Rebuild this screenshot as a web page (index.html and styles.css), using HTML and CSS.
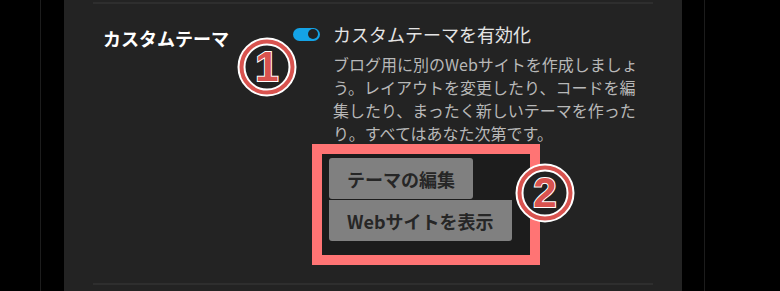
FILE: index.html
```html
<!DOCTYPE html>
<html lang="ja">
<head>
    <meta charset="UTF-8">
    <meta name="viewport" content="width=device-width, initial-scale=1.0">
    <title>カスタムテーマ</title>
    <link rel="stylesheet" href="styles.css">
</head>
<body>

    <div class="frame">
        <div class="gutter"></div>

        <!-- Settings panel -->
        <div class="panel">
            <div class="setting-row">
                <div class="setting-label">カスタムテーマ</div>

                <svg class="marker marker-one" width="60" height="60" viewBox="0 0 60 60">
                    <circle cx="30" cy="30" r="25.5" fill="#222" stroke="#fff" stroke-width="8"/>
                    <circle cx="30" cy="30" r="25.5" fill="none" stroke="#d9534f" stroke-width="4"/>
                    <text x="30" y="44" text-anchor="middle" class="marker-num">1</text>
                </svg>

                <div class="setting-body">
                    <label class="toggle-line">
                        <span class="toggle"><span class="knob"></span></span>
                        <span class="toggle-text">カスタムテーマを有効化</span>
                    </label>
                    <p class="help">ブログ用に別のWebサイトを作成しましょう。レイアウトを変更したり、コードを編集したり、まったく新しいテーマを作ったり。すべてはあなた次第です。</p>

                    <!-- Highlighted button group -->
                    <div class="highlight">
                        <button class="btn">テーマの編集</button>
                        <button class="btn">Webサイトを表示</button>

                        <svg class="marker marker-two" width="60" height="60" viewBox="0 0 60 60">
                            <circle cx="30" cy="30" r="25.5" fill="#222" stroke="#fff" stroke-width="8"/>
                            <circle cx="30" cy="30" r="25.5" fill="none" stroke="#d9534f" stroke-width="4"/>
                            <text x="30" y="44" text-anchor="middle" class="marker-num">2</text>
                        </svg>
                    </div>
                </div>
            </div>
        </div>

        <div class="gutter gutter-right"></div>
    </div>

</body>
</html>
```

FILE: styles.css
```css
body {
    font-family: "Noto Sans CJK JP", "Noto Sans", sans-serif;
    margin: 0;
    padding: 0;
    background-color: #000;
    width: 780px;
    height: 291px;
    overflow: hidden;
}

.frame {
    display: flex;
    height: 291px;
}

.gutter {
    width: 40px;
    margin-right: 23px;
    border-right: 1px solid #1c1c1c;
    flex-shrink: 0;
}

.gutter-right {
    width: 22px;
    margin-right: 0;
    border-right: 1px solid #1c1c1c;
}

.panel {
    width: 618px;
    background-color: #232323;
    padding: 0 29px;
    box-sizing: border-box;
    flex-shrink: 0;
}

.setting-row {
    position: relative;
    display: flex;
    border-top: 2px solid #2e2e2e;
    border-bottom: 2px solid #2e2e2e;
    margin-top: 2px;
    height: 283px;
    box-sizing: border-box;
    padding: 18px 0 0 10px;
}

.setting-label {
    width: 190px;
    color: #fff;
    font-size: 18px;
    font-weight: bold;
    line-height: 26px;
    padding-top: 3px;
}

.setting-body {
    flex: 1;
}

.toggle-line {
    display: flex;
    align-items: center;
    gap: 13px;
}

.toggle {
    width: 27px;
    height: 13px;
    border-radius: 7px;
    background-color: #14a3e6;
    position: relative;
    flex-shrink: 0;
}

.knob {
    position: absolute;
    top: 1.5px;
    right: 2px;
    width: 10px;
    height: 10px;
    border-radius: 50%;
    background-color: #222;
}

.toggle-text {
    color: #e4e4e4;
    font-size: 18px;
    line-height: 24px;
}

.help {
    margin: 7px 0 0 40px;
    width: 310px;
    color: #b8b8b8;
    font-size: 16px;
    line-height: 23px;
}

.highlight {
    position: relative;
    display: flex;
    flex-direction: column;
    align-items: flex-start;
    width: 182px;
    margin: -1px 0 0 19px;
    padding: 4px 19px 14px 7px;
    border: 10px solid #ff7474;
    background-color: #1c1c1c;
}

.btn {
    font-family: "Noto Sans CJK JP", "Noto Sans", sans-serif;
    background-color: #808080;
    color: #262626;
    border: none;
    border-radius: 3px;
    font-size: 18px;
    font-weight: bold;
    height: 41px;
    padding: 0 18px;
    white-space: nowrap;
    cursor: pointer;
}

.btn + .btn {
    margin-top: 1px;
    border-top-left-radius: 0;
    border-top-right-radius: 0;
}

.marker {
    position: absolute;
}

.marker-one {
    left: 144px;
    top: 33px;
}

.marker-two {
    left: 193px;
    top: 9px;
}

.marker-num {
    font-family: "Liberation Sans", sans-serif;
    font-weight: bold;
    font-size: 42px;
    fill: #d9534f;
    stroke: #fff;
    stroke-width: 2px;
    paint-order: stroke;
}
```
